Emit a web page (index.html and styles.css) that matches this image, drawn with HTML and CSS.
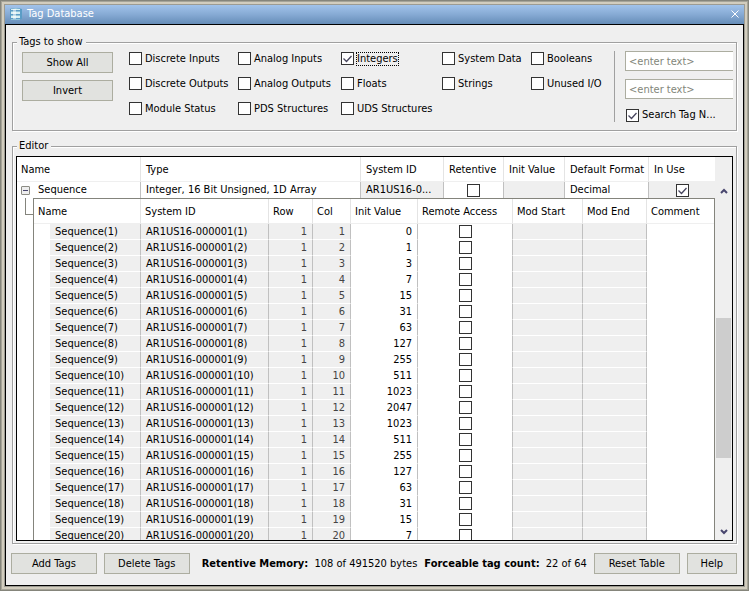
FILE: index.html
```html
<!DOCTYPE html>
<html lang="en">
<head>
    <meta charset="UTF-8">
    <meta name="viewport" content="width=device-width, initial-scale=1.0">
    <title>Tag Database</title>
    <link rel="stylesheet" href="styles.css">
</head>
<body>
    <div class="window">
        <header class="titlebar">
            <svg class="logo" width="14" height="14" viewBox="0 0 14 14">
                <path d="M1 2q6-2 12 0v10q-6 2-12 0z" fill="#5b9dc6"/>
                <path d="M2 2q5-1 9 0v1H2zM2 5h9v2H2zM2 9h9v2H2z" fill="#d8f0f2"/>
                <path d="M2 4h9v1H2zM2 8h9v1H2zM2 12h9v1H2z" fill="#8fc4d8"/>
                <path d="M4 2h3v10H4z" fill="#fff" opacity=".5"/>
            </svg>
            <h1 class="title">Tag Database</h1>
            <button class="close" aria-label="Close">
                <svg width="8" height="8" viewBox="0 0 8 8"><path d="M.5.5l7 7M7.5.5l-7 7" stroke="#fff" fill="none"/></svg>
            </button>
        </header>

        <main class="content">
            <fieldset class="group filters">
                <legend>Tags to show</legend>
                <div class="filter-row">
                    <div class="filter-buttons">
                        <button class="button">Show All</button>
                        <button class="button">Invert</button>
                    </div>
                    <div class="checks">
                        <label class="check"><input type="checkbox"><span>Discrete Inputs</span></label>
                        <label class="check"><input type="checkbox"><span>Analog Inputs</span></label>
                        <label class="check focused"><input type="checkbox" checked><span>Integers</span></label>
                        <label class="check"><input type="checkbox"><span>System Data</span></label>
                        <label class="check"><input type="checkbox"><span>Booleans</span></label>
                        <label class="check"><input type="checkbox"><span>Discrete Outputs</span></label>
                        <label class="check"><input type="checkbox"><span>Analog Outputs</span></label>
                        <label class="check"><input type="checkbox"><span>Floats</span></label>
                        <label class="check"><input type="checkbox"><span>Strings</span></label>
                        <label class="check"><input type="checkbox"><span>Unused I/O</span></label>
                        <label class="check"><input type="checkbox"><span>Module Status</span></label>
                        <label class="check"><input type="checkbox"><span>PDS Structures</span></label>
                        <label class="check"><input type="checkbox"><span>UDS Structures</span></label>
                    </div>
                    <div class="search">
                        <input class="text" type="text" placeholder="&lt;enter text&gt;" aria-label="First search text">
                        <input class="text" type="text" placeholder="&lt;enter text&gt;" aria-label="Second search text">
                        <label class="check"><input type="checkbox" checked><span>Search Tag N...</span></label>
                    </div>
                </div>
            </fieldset>

            <fieldset class="group editor">
                <legend>Editor</legend>
                <div class="grid">
                    <div class="view">
                        <table class="tags">
                            <colgroup>
                                <col class="w-name"><col><col class="w-id"><col class="w-retentive">
                                <col class="w-init"><col class="w-format"><col class="w-use">
                            </colgroup>
                            <thead>
                                <tr>
                                    <th class="first">Name</th><th>Type</th><th>System ID</th><th>Retentive</th>
                                    <th>Init Value</th><th>Default Format</th><th>In Use</th>
                                </tr>
                            </thead>
                            <tbody>
                                <tr>
                                    <td class="first"><button class="toggle" aria-label="Collapse"></button>Sequence</td>
                                    <td>Integer, 16 Bit Unsigned, 1D Array</td>
                                    <td class="locked">AR1US16-0...</td>
                                    <td class="center"><input type="checkbox" aria-label="Retentive"></td>
                                    <td class="locked"></td>
                                    <td>Decimal</td>
                                    <td class="locked center"><input type="checkbox" checked aria-label="In Use"></td>
                                </tr>
                                <tr>
                                    <td class="nested" colspan="7">
                                        <div class="nested-row">
                                            <div class="branch"></div>
                                            <table class="elements">
                                                <colgroup>
                                                    <col class="w-indent"><col class="w-element"><col class="w-address">
                                                    <col class="w-row"><col class="w-col"><col class="w-value">
                                                    <col class="w-remote"><col class="w-start"><col class="w-end"><col>
                                                </colgroup>
                                                <thead>
                                                    <tr>
                                                        <th colspan="2">Name</th><th>System ID</th><th>Row</th><th>Col</th>
                                                        <th>Init Value</th><th>Remote Access</th><th>Mod Start</th>
                                                        <th>Mod End</th><th>Comment</th>
                                                    </tr>
                                                </thead>
                                                <tbody id="elements"></tbody>
                                            </table>
                                        </div>
                                    </td>
                                </tr>
                            </tbody>
                        </table>
                    </div>
                    <div class="scrollbar">
                        <button class="arrow" aria-label="Scroll up">
                            <svg width="8" height="6" viewBox="0 0 8 6"><path d="M1 5l3-3 3 3" stroke="#48466e" stroke-width="2" fill="none"/></svg>
                        </button>
                        <div class="track"><div class="thumb"></div></div>
                        <button class="arrow" aria-label="Scroll down">
                            <svg width="8" height="6" viewBox="0 0 8 6"><path d="M1 1l3 3 3-3" stroke="#48466e" stroke-width="2" fill="none"/></svg>
                        </button>
                    </div>
                </div>
            </fieldset>

            <footer class="footer">
                <button class="button">Add Tags</button>
                <button class="button">Delete Tags</button>
                <p class="stat"><b>Retentive Memory:</b> <span>108 of 491520 bytes</span></p>
                <p class="stat last"><b>Forceable tag count:</b> <span>22 of 64</span></p>
                <button class="button">Reset Table</button>
                <button class="button small">Help</button>
            </footer>
        </main>
    </div>

    <script src="script.js"></script>
</body>
</html>
```
FILE: styles.css
```css
* {
    box-sizing: border-box;
}
body {
    margin: 0;
    background: #efefef;
    color: #000;
    font-family: "DejaVu Sans Condensed", Tahoma, sans-serif;
    font-size: 11px;
    line-height: 14px;
}
button, input {
    font: inherit;
    color: inherit;
}
.window {
    height: 100vh;
    display: flex;
    flex-direction: column;
    border: 1px solid #85857b;
    box-shadow: inset 0 0 0 1px #a6a498, inset 0 0 0 3px #d2cdbe, inset 0 0 0 4px #9c9b92;
    padding: 4px;
}

/* title bar */
.titlebar {
    display: flex;
    align-items: center;
    height: 19px;
    padding: 0 5px 1px 4px;
    gap: 4px;
    background: linear-gradient(#a2c3ea, #86aad4 50%, #668db8);
    color: #fff;
}
.title {
    flex: 1;
    margin: 0;
    font-size: 11px;
    font-weight: normal;
}
.close {
    display: flex;
    padding: 0;
    border: none;
    background: none;
}
.content {
    flex: 1;
    min-height: 0;
    display: flex;
    flex-direction: column;
    border: 1px solid #000;
    background: #efefef;
    padding: 10px 5px 11px;
}

/* group boxes */
.group {
    min-width: 0;
    margin: 0 1px;
    padding: 0 3px 2px;
    border: 1px solid #a0a0a0;
    box-shadow: 1px 1px #fff, inset 1px 1px #fff;
}
.group legend {
    margin-left: 1px;
    padding: 0 3px 0 2px;
    background: #efefef;
}
.filters {
    margin-bottom: 8px;
}
.filter-row {
    display: flex;
    padding: 2px 0 6px 6px;
}
.filter-buttons {
    display: flex;
    flex-direction: column;
    gap: 7px;
    width: 91px;
    padding-top: 1px;
}
.button {
    width: 87px;
    height: 21px;
    padding: 0;
    border: 1px solid #acada0;
    background: #e1e2df;
    text-align: center;
}
.filter-buttons .button {
    width: 100%;
}
.checks {
    flex: 1;
    display: grid;
    grid-template-columns: 109px 103px 101px 89px auto;
    grid-auto-rows: 13px;
    row-gap: 12px;
    align-content: start;
    padding: 1px 0 0 16px;
}
.check {
    display: flex;
    align-items: center;
    gap: 2px;
    white-space: nowrap;
}
.check span {
    padding: 0 1px;
}
.focused span {
    outline: 1px dotted #000;
    outline-offset: -1px;
}
input[type="checkbox"] {
    appearance: none;
    flex: none;
    display: block;
    width: 13px;
    height: 13px;
    margin: 0;
    border: 1px solid #333;
    background: #fff;
}
input[type="checkbox"]:checked {
    background: #fff url("data:image/svg+xml,%3Csvg xmlns='http://www.w3.org/2000/svg' viewBox='0 0 11 11'%3E%3Cpath d='M1.5 5.5l3 3 5-5.5' fill='none' stroke='%2348465e' stroke-width='1.3'/%3E%3C/svg%3E") center / 11px 11px;
}
.search {
    width: 119px;
    display: flex;
    flex-direction: column;
    gap: 8px;
    padding-left: 10px;
    border-left: 1px solid #a0a0a0;
}
.text {
    width: 100%;
    height: 20px;
    padding: 0 3px;
    border: 1px solid #acada0;
    border-right: none;
    border-radius: 0;
    background: #fff;
}
.text::placeholder {
    color: #82867a;
    opacity: 1;
}
.search .check {
    padding: 1px 0 0 1px;
}

/* tag grid */
.editor {
    flex: 1;
    min-height: 0;
    display: flex;
    padding-top: 3px;
}
.grid {
    flex: 1;
    height: 100%;
    display: flex;
    border: 1px solid #000;
    overflow: hidden;
}
.view {
    flex: 1;
    min-width: 0;
    overflow: hidden;
    background: #fff;
}
table {
    width: 100%;
    table-layout: fixed;
    border-collapse: separate;
    border-spacing: 0;
}
th, td {
    padding: 0 0 0 5px;
    text-align: left;
    font-weight: normal;
    white-space: nowrap;
    overflow: hidden;
}
th {
    height: 25px;
    padding-top: 2px;
    border-right: 1px solid #e4e4e4;
    border-bottom: 1px solid #efefef;
}
td {
    height: 16px;
    border-right: 1px solid #c0c0c0;
}
.tags th:last-child, .tags td:last-child, .elements th:last-child, .elements td:last-child {
    border-right: none;
}
.locked {
    background: #efefef;
}
.center {
    padding: 0;
}
.center input {
    margin: 0 auto;
}
.first, .elements th {
    padding-left: 4px;
}
.toggle {
    width: 9px;
    height: 9px;
    margin-right: 8px;
    padding: 0;
    border: 1px solid #8c8c84;
    border-radius: 1px;
    background: linear-gradient(#48466e, #48466e) center / 5px 1px no-repeat #eee;
    vertical-align: -1px;
}
.nested {
    padding: 0;
}
.nested-row {
    display: flex;
    align-items: flex-start;
}
.branch {
    flex: none;
    width: 8px;
    height: 17px;
    margin-left: 8px;
    border-left: 1px solid #84847c;
    border-bottom: 1px solid #84847c;
}
.elements {
    border: 1px solid #84847c;
    border-bottom: none;
}
.elements tbody td {
    border-bottom: 1px solid #fff;
}
.elements .indent {
    border-right: none;
}
.elements .number {
    padding: 0 5px 0 0;
    text-align: right;
}
.number.locked {
    color: #444;
}
.w-name { width: 124px; }
.w-id { width: 83px; }
.w-retentive { width: 60px; }
.w-init { width: 61px; }
.w-format { width: 84px; }
.w-use { width: 66px; }
.w-indent { width: 16px; }
.w-element { width: 91px; }
.w-address { width: 128px; }
.w-row { width: 44px; }
.w-col { width: 38px; }
.w-value { width: 67px; }
.w-remote { width: 95px; }
.w-start { width: 70px; }
.w-end { width: 64px; }

.scrollbar {
    width: 17px;
    display: flex;
    flex-direction: column;
    padding-top: 25px;
    background: #efefef;
}
.arrow {
    display: flex;
    justify-content: center;
    align-items: center;
    height: 17px;
    padding: 0;
    border: none;
    background: none;
}
.track {
    flex: 1;
    display: flex;
    flex-direction: column;
    padding: 119px 1px 65px;
}
.thumb {
    flex: 1;
    background: #cdcdcd;
}

/* bottom bar */
.footer {
    display: flex;
    align-items: center;
    gap: 7px;
    padding: 9px 1px 0 0;
}
.stat {
    margin: 0 0 0 5px;
    white-space: nowrap;
}
.stat b {
    margin-right: 3px;
}
.last {
    margin-left: auto;
}
.small {
    width: 51px;
}
```
FILE: script.js
```javascript
// init values of the Sequence array
const values = [0, 1, 3, 7, 15, 31, 63, 127, 255, 511, 1023, 2047, 1023, 511, 255, 127, 63, 31, 15, 7];

document.getElementById('elements').innerHTML = values.map(function(value, i) {
    const n = i + 1;
    return `<tr>
        <td class="indent"></td>
        <td class="locked">Sequence(${n})</td>
        <td class="locked">AR1US16-000001(${n})</td>
        <td class="locked number">1</td>
        <td class="locked number">${n}</td>
        <td class="number">${value}</td>
        <td class="center"><input type="checkbox" aria-label="Remote Access ${n}"></td>
        <td class="locked"></td>
        <td class="locked"></td>
        <td></td>
    </tr>`;
}).join('');
```
